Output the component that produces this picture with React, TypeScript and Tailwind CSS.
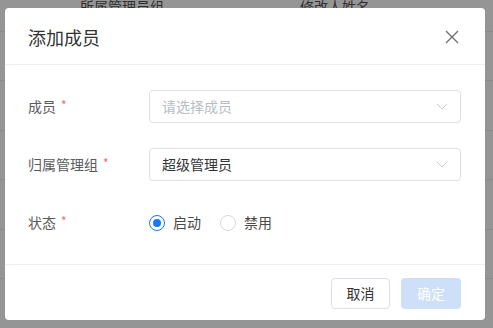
import React from 'react';

const font = { fontFamily: '"Noto Sans CJK SC", "Noto Sans", sans-serif' };

const Chevron = () => (
  <svg width="12" height="7" viewBox="0 0 12 7" fill="none">
    <path d="M1 1l5 5 5-5" stroke="#c8cbd1" strokeWidth="1" />
  </svg>
);

const Label = ({ text }: { text: string }) => (
  <div className="w-[121px] flex items-center text-[14px] text-[#5a5a5a]">
    {text}
    <span className="ml-[5px] mb-[3px] text-[12px] text-[#f56c6c] leading-none">*</span>
  </div>
);

const Select = ({ value, placeholder }: { value?: string; placeholder?: string }) => (
  <div className="flex-1 h-[33px] border border-[#dcdfe6] rounded-[4px] flex items-center justify-between pl-[12px] pr-[12px]">
    <span className={value ? 'text-[14px] text-[#333]' : 'text-[14px] text-[#b8bcc4]'}>
      {value ?? placeholder}
    </span>
    <Chevron />
  </div>
);

const Radio = ({ checked, text }: { checked?: boolean; text: string }) => (
  <div className="flex items-center">
    {checked ? (
      <span className="w-[16px] h-[16px] rounded-full border border-[#1677ff] flex items-center justify-center">
        <span className="w-[8px] h-[8px] rounded-full bg-[#1677ff]" />
      </span>
    ) : (
      <span className="w-[16px] h-[16px] rounded-full border border-[#d9d9d9] bg-white" />
    )}
    <span className="ml-[8px] text-[14px] text-[#4a4a4a]">{text}</span>
  </div>
);

export default function App() {
  return (
    <div style={font} className="relative w-[493px] h-[328px] overflow-hidden bg-[#959595]">
      {/* page behind the mask */}
      <div className="mt-[-18px]">
        <div className="h-[50px] flex items-center border-b border-[#8a8a8a] text-[14px] text-[#2e2e2e]">
          <span className="ml-[80px] w-[220px]">所属管理员组</span>
          <span>修改人姓名</span>
        </div>
        {[0, 1, 2, 3, 4].map((i) => (
          <div key={i} className="h-[49.4px] border-b border-[#8a8a8a]" />
        ))}
      </div>

      <div className="absolute left-[5px] top-[8px] w-[480px] h-[312px] bg-white rounded-[4px] flex flex-col">
        <div className="h-[57px] flex items-center justify-between pl-[23px] pr-[26px] border-b border-[#ebeef5]">
          <span className="text-[18px] text-[#303133] mt-[2px]">添加成员</span>
          <svg width="14" height="14" viewBox="0 0 14 14" className="mt-[1px]">
            <path d="M1 1l12 12M13 1L1 13" stroke="#707070" strokeWidth="1.4" />
          </svg>
        </div>

        <div className="flex-1 pl-[23px] pr-[24px] pt-[25px]">
          <div className="flex items-center">
            <Label text="成员" />
            <Select placeholder="请选择成员" />
          </div>
          <div className="flex items-center mt-[25px]">
            <Label text="归属管理组" />
            <Select value="超级管理员" />
          </div>
          <div className="flex items-center mt-[31px]">
            <Label text="状态" />
            <div className="flex items-center gap-[19px]">
              <Radio checked text="启动" />
              <Radio text="禁用" />
            </div>
          </div>
        </div>

        <div className="h-[56px] border-t border-[#ebeef5] flex items-center justify-end gap-[11px] pr-[24px] pt-[1px]">
          <button className="w-[59px] h-[31px] border border-[#dcdfe6] rounded-[4px] text-[14px] text-[#333] bg-white">
            取消
          </button>
          <button className="w-[60px] h-[31px] rounded-[4px] text-[14px] text-white bg-[#cde0f8]">
            确定
          </button>
        </div>
      </div>
    </div>
  );
}
